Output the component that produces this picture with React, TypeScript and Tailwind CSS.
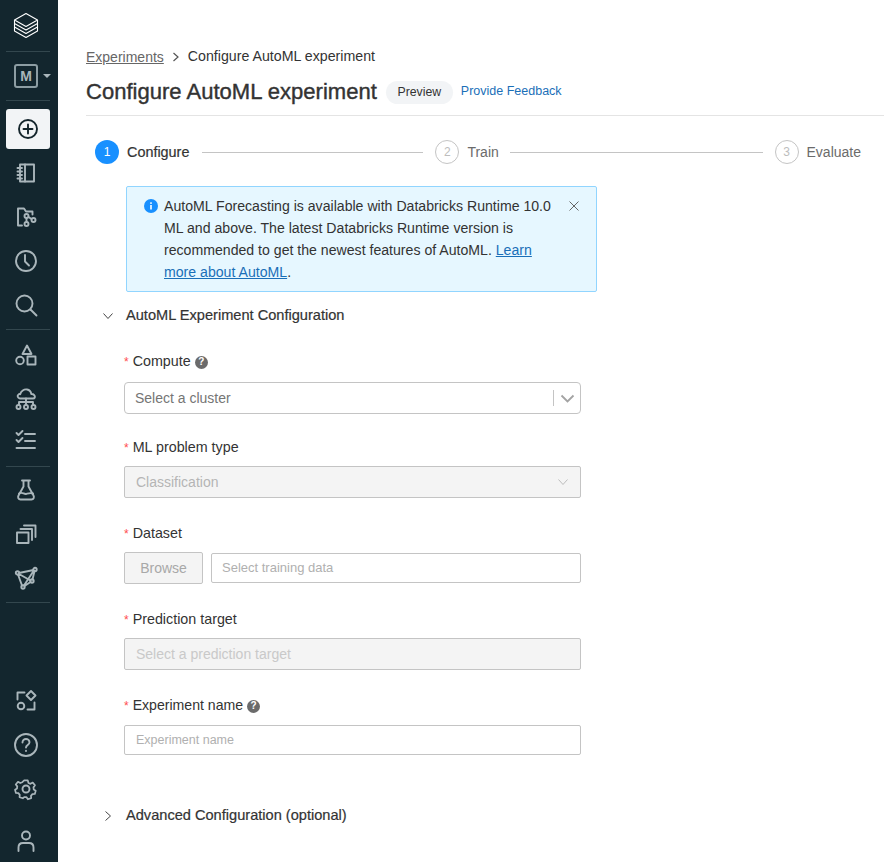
import React from "react";

const stroke = {
  fill: "none",
  stroke: "currentColor",
  strokeWidth: 1.9,
  strokeLinecap: "round" as const,
  strokeLinejoin: "round" as const,
};

function Icon({ children, size = 24 }: { children: React.ReactNode; size?: number }) {
  return (
    <svg width={size} height={size} viewBox="0 0 24 24" {...stroke}>
      {children}
    </svg>
  );
}

function NavItem({ children, h = "h-[44px]" }: { children: React.ReactNode; h?: string }) {
  return <div className={`${h} flex items-center justify-center pr-[6px] text-[#aab6bb]`}>{children}</div>;
}

function Divider({ className = "" }: { className?: string }) {
  return <div className={`mx-[6px] h-px w-[44px] bg-[#33474e] ${className}`} />;
}

function Sidebar() {
  return (
    <aside className="flex h-[862px] w-[58px] shrink-0 flex-col bg-[#13262e]">
      <div className="flex h-[51px] items-center justify-center pr-[6px] text-white">
        <svg width="26" height="27" viewBox="0 0 26 27" fill="none" stroke="currentColor" strokeWidth="1.1" strokeLinejoin="round">
          <path d="M13 1.5 1.5 8 13 14.5 24.5 8z" />
          <path d="M1.5 8v3.5L13 18l11.5-6.5V8" />
          <path d="M1.5 11.5V15L13 21.5 24.5 15v-3.5" />
          <path d="M1.5 15v4L13 25.5 24.5 19v-4" />
        </svg>
      </div>
      <Divider />
      <div className="flex h-[48px] items-center gap-[5px] pl-[14px] text-[#aab6bb]">
        <div className="flex h-[24px] w-[24px] items-center justify-center rounded-[3px] border-2 border-[#8d9da3] text-[14px] font-bold leading-none">
          M
        </div>
        <div className="h-0 w-0 border-x-[4px] border-t-[4px] border-x-transparent border-t-[#aab6bb]" />
      </div>
      <Divider />
      <div className="mx-[6px] mt-[8px] flex h-[40px] w-[44px] shrink-0 items-center justify-center rounded-[3px] bg-[#f2f4f6] text-[#14252c]">
        <svg width="22" height="22" viewBox="0 0 22 22" fill="none" stroke="currentColor" strokeWidth="1.9" strokeLinecap="round">
          <circle cx="11" cy="11" r="9" />
          <path d="M11 6.5v9M6.5 11h9" />
        </svg>
      </div>
      <div className="mt-[2px]" />
      <NavItem>
        <Icon>
          <path d="M6 3.5h14v17H6z" />
          <path d="M11 3.5v17" />
          <path d="M3.5 7H8M3.5 10.5H8M3.5 14H8M3.5 17.5H8" />
        </Icon>
      </NavItem>
      <NavItem>
        <Icon>
          <path d="M8 20.5H4V3.5h6l2 3h6.5v3" />
          <circle cx="12.5" cy="11" r="2" />
          <circle cx="12.5" cy="19" r="2" />
          <circle cx="19.5" cy="15" r="2" />
          <path d="M12.5 13v4M14.5 12l3 2" />
        </Icon>
      </NavItem>
      <NavItem>
        <Icon>
          <circle cx="12" cy="12" r="10" />
          <path d="M11 6v6.5l4 4" />
        </Icon>
      </NavItem>
      <NavItem>
        <Icon>
          <circle cx="10.5" cy="10.5" r="8" />
          <path d="m16.5 16.5 6 6" />
        </Icon>
      </NavItem>
      <Divider className="mt-[2px]" />
      <div className="mt-[3px]" />
      <NavItem>
        <Icon>
          <path d="M13 2.5 17.5 11h-9z" />
          <circle cx="6" cy="17.5" r="3.8" />
          <path d="M13.5 13.5h8v8h-8z" />
        </Icon>
      </NavItem>
      <NavItem>
        <Icon>
          <path d="M6 11.5C3.5 11 3 8.5 4.5 7.5c.5-.4 1.2-.5 1.7-.3C7 4 10 2 13 2.5c2.5.4 4 2.5 4.3 4.5 2.5-.2 4 2 3.5 3.5-.3.6-.8 1-1.800 1H6z" />
          <path d="M12 11.500V18M5 18v-3h14v3" />
          <circle cx="4.500" cy="20" r="2" />
          <circle cx="12" cy="20" r="2" />
          <circle cx="19.500" cy="20" r="2" />
        </Icon>
      </NavItem>
      <div className="-mt-[3px]">
        <NavItem>
          <Icon>
            <path d="m2.500 5 2 2 4-4M2.500 12l2 2 4-4" />
            <path d="M11 6h10M11 13h10M2.500 20h18.500" />
          </Icon>
        </NavItem>
      </div>
      <Divider className="mt-[4px]" />
      <div className="mt-[1px]" />
      <NavItem>
        <Icon>
          <path d="M8 2.500h8M9.500 2.500v6L4.500 17.500c-1 2 0 4 2 4h11c2 0 3-2 2-4l-5-9v-6" />
          <path d="M5 15.500c3-2 5 1 7 .5s4-1.500 7-.5" />
        </Icon>
      </NavItem>
      <NavItem h="h-[44px]">
        <Icon>
          <path d="M3 10.500h11.500V21H3z" />
          <path d="M6.500 7h11.500v11" />
          <path d="M10 3.500h11.500V15" />
        </Icon>
      </NavItem>
      <NavItem>
        <Icon>
          <circle cx="3.500" cy="7" r="1.700" />
          <circle cx="21" cy="3.500" r="1.700" />
          <circle cx="18" cy="15" r="1.700" />
          <circle cx="9" cy="21" r="1.700" />
          <path d="M5 7 19.500 4M20.500 5l-2 8.500M16.500 16l-6 4M8 19.500 4 8.500M5 8l11.500 6.500M19.500 5 10 19.500" />
        </Icon>
      </NavItem>
      <Divider className="mt-[2px]" />
      <div className="mt-auto" />
      <NavItem>
        <Icon>
          <path d="M10.500 3.500h-7v7" />
          <path d="M20.500 13.500v7h-7" />
          <circle cx="7" cy="17" r="3.300" />
          <path d="m17 2 4.500 4.500-4.500 4.500-4.500-4.500z" />
        </Icon>
      </NavItem>
      <NavItem>
        <Icon>
          <circle cx="12" cy="12" r="11" />
          <path d="M8.500 9.500C8.500 7.500 10 6 12 6s3.500 1.500 3.500 3.300c0 2.700-3.500 2.700-3.500 5.200" />
          <path d="M12 17.800v.2" />
        </Icon>
      </NavItem>
      <NavItem>
        <Icon>
          <circle cx="12" cy="12" r="3.500" />
          <path d="M10 2.500h4l.7 2.800 2.300 1 2.500-1.400 2.500 3-1.700 2.300.3 2.400 2.200 1.400-1 3.500-2.700.2-1.600 1.900.3 2.600-3.700 1.200-1.500-2.300h-2.600L8.500 22.300l-3.700-1.200.3-2.600-1.600-1.900-2.700-.2-1-3.500 2.200-1.400.3-2.400L.6 7l2.500-3L5.600 5.400l2.300-1z" transform="translate(1.200 1.200) scale(.9)" />
        </Icon>
      </NavItem>
      <div className="mt-[8px]" />
      <NavItem h="h-[43px]">
        <Icon>
          <circle cx="12" cy="6.500" r="4" />
          <path d="M4.500 22v-3.500c0-3 2-4.500 4.500-4.500h6c2.500 0 4.500 1.500 4.500 4.500V22" />
        </Icon>
      </NavItem>
    </aside>
  );
}

function Step({ n, label, active }: { n: number; label: string; active?: boolean }) {
  return (
    <div className="flex shrink-0 items-center gap-[8px]">
      <div
        className={
          active
            ? "flex h-[24px] w-[24px] items-center justify-center rounded-full bg-[#1890ff] text-[12px] text-white"
            : "flex h-[24px] w-[24px] items-center justify-center rounded-full border border-[#c4c4c4] text-[12px] text-[#bdbdbd]"
        }
      >
        {n}
      </div>
      <span className={active ? "pt-[2px] text-[14.400px] text-[#333] [-webkit-text-stroke:0.2px_#333]" : "text-[14px] text-[#6b6b6b]"}>{label}</span>
    </div>
  );
}

function HelpDot() {
  return (
    <span className="flex h-[13px] w-[13px] items-center justify-center rounded-full bg-[#6b6b6b] text-[10px] font-bold leading-none text-white">
      ?
    </span>
  );
}

function Label({ text, help, className = "", textClass = "text-[14.300px]" }: { text: string; help?: boolean; className?: string; textClass?: string }) {
  return (
    <div className={`flex h-[20px] items-center pt-[2px] text-[#333] ${textClass} ${className}`}>
      <span className="mr-[4px] text-[12px] text-[#ff4d4f]">*</span>
      <span>{text}</span>
      {help && <span className="ml-[4px]"><HelpDot /></span>}
    </div>
  );
}

function Chevron({ dir, className = "" }: { dir: "down" | "right"; className?: string }) {
  return (
    <svg width="12" height="12" viewBox="0 0 12 12" fill="none" stroke="currentColor" strokeWidth="1" className={className}>
      {dir === "down" ? <path d="M1.500 3.500 6 8.500l4.500-5" /> : <path d="M3.500 1.500 8.500 6l-5 4.500" />}
    </svg>
  );
}

export default function App() {
  return (
    <div className="flex h-[862px] w-[884px] overflow-hidden bg-white font-['Liberation_Sans',Arial,sans-serif]">
      <Sidebar />
      <main className="min-w-0 flex-1 pl-[28px]">
        {/* Breadcrumb */}
        <div className="mt-[46px] flex h-[20px] items-center pt-[2px] text-[14.200px] text-[#333]">
          <a className="text-[14px] text-[#666] underline">Experiments</a>
          <svg width="8" height="10" viewBox="0 0 8 10" fill="none" stroke="#555" strokeWidth="1.200" className="mx-[8px]">
            <path d="m1.500 1 4.500 4-4.500 4" />
          </svg>
          <span>Configure AutoML experiment</span>
        </div>

        {/* Title */}
        <div className="mt-[11px] flex h-[30px] items-center">
          <h1 className="text-[22.050px] leading-[30px] text-[#333] [-webkit-text-stroke:0.4px_#333]">Configure AutoML experiment</h1>
          <span className="ml-[9px] flex h-[23px] w-[67px] items-center justify-center rounded-full bg-[#f2f4f6] text-[12.300px] text-[#333]">
            Preview
          </span>
          <a className="ml-[8px] pb-[2px] text-[12.500px] text-[#1a6fb8]">Provide Feedback</a>
        </div>
        <div className="mt-[8px] h-px w-full bg-[#e4e4e4]" />

        {/* Steps */}
        <div className="ml-[9px] mr-[23px] mt-[24px] flex h-[24px] items-center">
          <Step n={1} label="Configure" active />
          <div className="ml-[13px] mr-[12px] h-px w-[221px] bg-[#c4c4c4]" />
          <Step n={2} label="Train" />
          <div className="ml-[11px] mr-[12px] h-px flex-1 bg-[#c4c4c4]" />
          <Step n={3} label="Evaluate" />
        </div>

        {/* Alert */}
        <div className="ml-[40px] mt-[22px] flex h-[106px] w-[471px] items-start rounded-[2px] border border-[#91d5ff] bg-[#e6f7ff] pl-[16px] pt-[8px]">
          <svg width="16" height="16" viewBox="0 0 16 16" className="mt-[3px] shrink-0">
            <circle cx="8" cy="8" r="7" fill="#1890ff" />
            <rect x="7.200" y="7" width="1.600" height="4.500" fill="#fff" />
            <rect x="7.200" y="4.300" width="1.600" height="1.600" fill="#fff" />
          </svg>
          <div className="ml-[5px] w-[400px] text-[14.120px] leading-[22px] text-[#333]">
            <div>AutoML Forecasting is available with Databricks Runtime 10.0</div>
            <div>ML and above. The latest Databricks Runtime version is</div>
            <div>
              recommended to get the newest features of AutoML.{" "}
              <a className="text-[#1a6fb8] underline">Learn</a>
            </div>
            <div>
              <a className="text-[#1a6fb8] underline">more about AutoML</a>.
            </div>
          </div>
          <svg width="10" height="10" viewBox="0 0 10 10" fill="none" stroke="#666" strokeWidth="1" className="ml-[5px] mt-[6px]">
            <path d="m.5.5 9 9M9.500.5l-9 9" />
          </svg>
        </div>

        {/* Section header */}
        <div className="mt-[13px] flex h-[20px] items-center pt-[2px] text-[14.600px] text-[#333] [-webkit-text-stroke:0.2px_#333]">
          <Chevron dir="down" className="ml-[16px] text-[#444]" />
          <span className="ml-[12px]">AutoML Experiment Configuration</span>
        </div>

        {/* Form */}
        <div className="ml-[38px] w-[457px]">
          <Label text="Compute" help className="mt-[26px]" />
          <div className="mt-[11px] flex h-[32px] items-center rounded-[4px] border border-[#c4c4c4] pl-[10px] text-[14px] text-[#757575]">
            <span className="flex-1">Select a cluster</span>
            <div className="h-[16px] w-px bg-[#c4c4c4]" />
            <svg width="15" height="15" viewBox="0 0 15 15" fill="none" stroke="#a3a3a3" strokeWidth="1.800" className="ml-[6px] mr-[5px]">
              <path d="m1.500 4.500 6 6 6-6" />
            </svg>
          </div>

          <Label text="ML problem type" className="mt-[23px]" />
          <div className="mt-[9px] flex h-[32px] items-center rounded-[2px] border border-[#c4c4c4] bg-[#f4f4f4] pl-[11px] pr-[11px] text-[14px] text-[#b5b5b5]">
            <span className="flex-1">Classification</span>
            <Chevron dir="down" className="text-[#bdbdbd]" />
          </div>

          <Label text="Dataset" className="mt-[25px]" />
          <div className="mt-[9px] flex h-[32px] items-center gap-[8px]">
            <div className="flex h-[32px] w-[79px] items-center justify-center rounded-[2px] border border-[#c4c4c4] bg-[#f4f4f4] text-[14px] text-[#a8a8a8]">
              Browse
            </div>
            <div className="flex h-[30px] flex-1 items-center rounded-[2px] border border-[#c4c4c4] pl-[10px] text-[13px] text-[#b0b0b0]">
              Select training data
            </div>
          </div>

          <Label text="Prediction target" className="mt-[25px]" />
          <div className="mt-[9px] flex h-[32px] items-center rounded-[2px] border border-[#c4c4c4] bg-[#f4f4f4] pl-[11px] text-[14px] text-[#c9c9c9]">
            Select a prediction target
          </div>

          <Label text="Experiment name" help className="mt-[25px]" textClass="text-[14.100px]" />
          <div className="mt-[10px] flex h-[30px] items-center rounded-[2px] border border-[#c4c4c4] pl-[11px] text-[12.500px] text-[#b0b0b0]">
            Experiment name
          </div>
        </div>

        <div className="mt-[50px] flex h-[20px] items-center pt-[2px] text-[14.600px] text-[#333] [-webkit-text-stroke:0.2px_#333]">
          <Chevron dir="right" className="ml-[16px] text-[#444]" />
          <span className="ml-[12px]">Advanced Configuration (optional)</span>
        </div>
      </main>
    </div>
  );
}
